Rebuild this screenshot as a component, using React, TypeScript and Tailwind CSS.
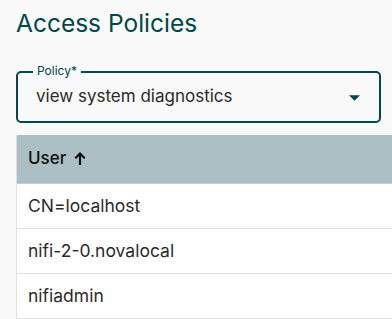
import React from "react";

export default function App() {
  const rows = ["CN=localhost", "nifi-2-0.novalocal", "nifiadmin"];
  return (
    <div
      className="w-[392px] h-[319px] overflow-hidden bg-[#f9f9f9] pl-4"
      style={{ fontFamily: "Inter, 'Noto Sans', sans-serif" }}
    >
      <h1 className="pt-[7px] text-[24.5px] leading-[32px] font-normal text-[#004849]">
        Access Policies
      </h1>
      <div className="relative mt-8 w-[365px] h-[52px] rounded-[5px] border-2 border-[#004849]">
        <span className="absolute -top-[10px] left-[15px] bg-[#f9f9f9] px-[4px] text-[12px] leading-[16px] text-[#004849]">
          Policy*
        </span>
        <div className="flex h-full items-center justify-between pl-[18px] pr-[19px]">
          <span className="text-[17px] text-[#2b2b2b]">view system diagnostics</span>
          <svg width="11" height="6" viewBox="0 0 10 5" className="mt-[1px]">
            <path d="M0 0 L10 0 L5 5 Z" fill="#004849" />
          </svg>
        </div>
      </div>
      <div className="mt-3 w-[400px] bg-white border-l border-[#e0e0e0]">
        <div className="flex h-[49px] items-center bg-[#acbfc5] border-b border-[#c4cfd3] pl-[11px] text-[17px] font-medium text-[#111]">
          <span>User</span>
          <svg width="12" height="13" viewBox="0 0 12 13" className="ml-[8px] -mt-[2px]">
            <path d="M6 1.5 V13" stroke="#111" strokeWidth="2.2" />
            <path d="M1.3 6.2 L6 1.5 L10.7 6.2" stroke="#111" strokeWidth="2.2" fill="none" />
          </svg>
        </div>
        {rows.map((r) => (
          <div
            key={r}
            className="flex h-[45px] items-center border-b border-[#e0e0e0] pl-[11px] text-[17.5px] text-[#2b2b2b]"
          >
            {r}
          </div>
        ))}
      </div>
    </div>
  );
}
